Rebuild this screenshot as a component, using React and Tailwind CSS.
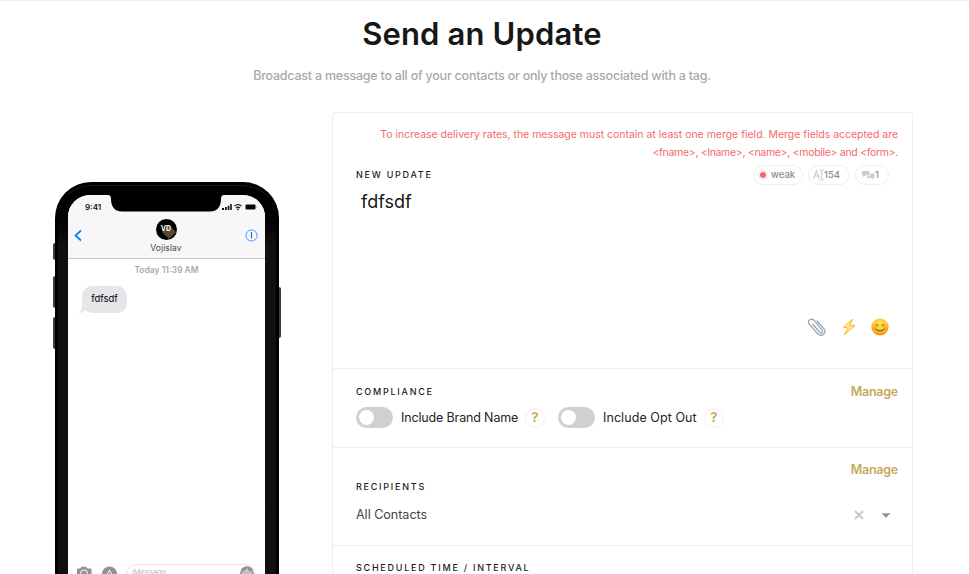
import React from "react";

function Label({ children, className = "" }) {
  return (
    <div className={`text-[9px] leading-[12px] font-medium tracking-[1.75px] text-[#1c1c1c] whitespace-nowrap ${className}`}>
      {children}
    </div>
  );
}

function Toggle() {
  return (
    <div className="flex h-[21px] w-[37px] shrink-0 items-center rounded-full bg-[#d0d0d0] pl-[3px]">
      <div className="size-[15px] rounded-full bg-white" />
    </div>
  );
}

function Help() {
  return (
    <div className="flex size-5 shrink-0 items-center justify-center rounded-full border border-[#f0f0f0] text-[13px] leading-none font-bold text-[#d0ab56]">
      ?
    </div>
  );
}

function Manage() {
  return <div className="pt-px text-[12.5px] leading-[16px] font-semibold tracking-[-0.25px] text-[#c9a959]">Manage</div>;
}

function StatusIcons() {
  return (
    <svg className="h-[8px] w-[36px]" viewBox="0 0 36 8">
      <path d="M0 5h2v2H0zM3 4h1.7v3H3zM5.7 2.7h1.7V7H5.7zM8.2 1h1.6v6H8.2z" fill="#111" />
      <g fill="none" stroke="#111" strokeWidth="1.1">
        <path d="M12.3 3.2Q16 0 19.7 3.2" />
        <path d="M14 5Q16 3.2 18 5" />
      </g>
      <circle cx="16" cy="6.3" r="0.9" fill="#111" />
      <rect x="23.5" y="1.5" width="10" height="5" rx="1" fill="#050505" />
      <path d="M35 3v2" stroke="#aaa" strokeWidth="0.7" />
    </svg>
  );
}

function Phone() {
  return (
    <div className="relative ml-[55px] mt-[70px] h-[450px] w-[224px] shrink-0 rounded-t-[36px] bg-[#000] px-[3px] pt-[3px]">
      <div className="absolute -left-[2px] top-[61px] h-[17px] w-[2px] rounded-l-sm bg-[#3c3c3e]" />
      <div className="absolute -left-[2px] top-[94px] h-[32px] w-[2px] rounded-l-sm bg-[#3c3c3e]" />
      <div className="absolute -left-[2px] top-[135px] h-[32px] w-[2px] rounded-l-sm bg-[#3c3c3e]" />
      <div className="absolute -right-[2px] top-[105px] h-[51px] w-[2px] rounded-r-sm bg-[#3c3c3e]" />
      <div className="h-full rounded-t-[33px] border-t border-[#1c1c1c] bg-gradient-to-b from-black to-[#101010] to-[60px] pl-[10px] pr-[11px] pt-[9px]">
        <div className="relative flex h-full flex-col overflow-hidden rounded-t-[22px] bg-white">
          <svg className="absolute left-[40px] top-0 h-[18px] w-[116px]" viewBox="0 0 116 18">
            <path d="M0 0Q3 0 3 4C3 12 7 16.5 14 16.5H102C109 16.5 113 12 113 4Q113 0 116 0Z" fill="#000" />
          </svg>
          <div className="h-[64px] shrink-0 border-b border-[#c9c9cb] bg-[#f7f7f7]">
            <div className="flex h-[24px] items-center justify-between pl-[17px] pr-[7px]">
              <span className="text-[8px] leading-[10px] font-semibold text-[#111]">9:41</span>
              <StatusIcons />
            </div>
            <div className="grid grid-cols-[32px_1fr_32px] pl-[6px] pr-[7px]">
              <svg className="mt-[10px] h-[13px] w-[8px]" viewBox="0 0 8 13">
                <path d="M7 1.5 1.5 6.5 7 11.5" fill="none" stroke="#087cff" strokeWidth="1.7" />
              </svg>
              <div className="flex flex-col items-center">
                <div className="relative flex size-[21px] items-center justify-center overflow-hidden rounded-full bg-black">
                  <div className="absolute left-[8px] top-[8px] size-[10px] rotate-45 bg-[#5b4a2c]" />
                  <span className="relative text-[7px] font-bold text-white">VD</span>
                </div>
                <span className="mt-[3px] text-[8.5px] leading-[11px] tracking-[0.1px] text-[#444]">Vojislav</span>
              </div>
              <svg className="mt-[10px] size-[13px] justify-self-end" viewBox="0 0 13 13">
                <circle cx="6.5" cy="6.5" r="5.5" fill="none" stroke="#2f91ff" strokeWidth="0.9" />
                <path d="M6.5 3v6.6" stroke="#087cff" strokeWidth="1.2" />
              </svg>
            </div>
          </div>
          <div className="mt-[5px] text-center text-[8.5px] leading-[12px] font-semibold text-[#aaaaae]">Today 11:39 AM</div>
          <div className="relative ml-[14px] mt-[10px] h-[27px] w-[45px] rounded-[10px] bg-[#e5e5ea] text-center text-[9.5px] leading-[25px] text-black">
            <svg className="absolute -left-[3px] bottom-0 h-[9px] w-[12px]" viewBox="0 0 12 9">
              <path d="M3 0C3 4 2 7 0 9Q4 9 6 6L12 4V0Z" fill="#e5e5ea" />
            </svg>
            <span className="relative">fdfsdf</span>
          </div>
          <div className="mt-[251px] flex h-[22px] items-start pl-[8px] pr-[8px]">
            <svg className="mt-[2px] h-[14px] w-[16px]" viewBox="0 0 16 14">
              <path d="M1 3.5Q1 2.5 2 2.5H4L5.5 .8H10L11.5 2.5H14.5Q15.5 2.5 15.5 3.5V13H1Z" fill="#929296" />
              <circle cx="8" cy="7.3" r="3.4" fill="none" stroke="#fff" strokeWidth="1" />
            </svg>
            <svg className="ml-[9px] mt-[2px] h-[16px] w-[17px]" viewBox="0 0 17 16">
              <circle cx="8.5" cy="8.3" r="7.7" fill="#929296" />
              <path d="M5 11 8.5 4 12 11M4 9h9" fill="none" stroke="#fff" strokeWidth="1" />
            </svg>
            <div className="ml-[8px] flex h-[21px] w-[130px] items-start justify-between rounded-full border border-[#e4e4e6] pl-[5px] pr-[1px]">
              <span className="mt-[2px] text-[7.5px] leading-[12px] text-[#b9b9bc]">iMessage</span>
              <svg className="mt-[1px] size-[14px]" viewBox="0 0 14 14">
                <circle cx="7" cy="7" r="6.8" fill="#929296" />
                <path d="M3 5.5v3M5 4v6M7 2.5v9M9 4.5v5M11 5.5v3" stroke="#fff" strokeWidth="0.9" />
              </svg>
            </div>
          </div>
        </div>
      </div>
    </div>
  );
}

function Paperclip() {
  return (
    <svg className="size-[20px]" viewBox="0 0 20 20" fill="none" strokeLinecap="round" strokeLinejoin="round">
      <path d="M6 7.5 12.8 15.4C14.5 17 16.5 15.2 15.2 13.5L7.4 3.6C4.6.3-.2 3.7 2.2 7.2L10.2 16.4C14.2 20.6 20.2 16.4 17.2 12.2L10 4" stroke="#8fa1b1" strokeWidth="1.2" />
      <path d="M3.3 7.3 11 16M8.2 3.5l7.5 9.2" stroke="#ccd6de" strokeWidth="0.6" />
    </svg>
  );
}

function Bolt() {
  return (
    <svg className="h-[18px] w-[14px]" viewBox="0 0 14 18">
      <path d="M11 1 1.2 9.4 6.3 10 2 17 13 7.5 7.5 7Z" fill="#ffe98a" stroke="#fbb42c" strokeWidth="1" strokeLinejoin="round" />
    </svg>
  );
}

function Smile() {
  return (
    <svg className="size-[18px]" viewBox="0 0 18 18">
      <defs>
        <radialGradient id="face" cx="50%" cy="32%" r="68%">
          <stop offset="0" stopColor="#ffe65a" />
          <stop offset="0.6" stopColor="#ffc52c" />
          <stop offset="1" stopColor="#f08a13" />
        </radialGradient>
      </defs>
      <circle cx="9" cy="9" r="8.6" fill="url(#face)" />
      <circle cx="3.9" cy="10.3" r="2" fill="#fb7c2d" opacity=".5" />
      <circle cx="14.1" cy="10.3" r="2" fill="#fb7c2d" opacity=".5" />
      <path d="M4.9 7.4Q6 5 7.1 7.4M10.9 7.4Q12 5 13.1 7.4M5.4 11.6Q9 14.4 12.6 11.6" fill="none" stroke="#70420f" strokeWidth="1" strokeLinecap="round" />
    </svg>
  );
}

const pill = "flex h-[20px] items-center rounded-full border border-[#eeeeee] text-[9.5px] leading-none font-medium text-[#8c8c8c]";

export default function App() {
  return (
    <div className="h-[574px] w-[969px] overflow-hidden border-t border-[#ededed] bg-white font-['Inter',sans-serif]">
      <header className="h-[111px] w-[964px] pt-[13px] text-center">
        <h1 className="text-[31px] leading-[40px] font-semibold tracking-[0.15px] text-[#171717]">Send an Update</h1>
        <p className="mt-[14px] text-[12.5px] leading-[16px] font-medium tracking-[-0.23px] text-[#a9a9a9]">
          Broadcast a message to all of your contacts or only those associated with a tag.
        </p>
      </header>
      <main className="flex items-start">
        <Phone />
        <div className="ml-[53px] h-[500px] w-[581px] shrink-0 rounded-[3px] border border-[#eeeeee]">
          <section className="h-[256px] border-b border-[#eeeeee] pl-[23px] pr-[14px] pt-[13px]">
            <div className="text-right text-[10.5px] leading-[18px] text-[#f46a6a]">
              <div className="whitespace-nowrap tracking-[-0.02px]">To increase delivery rates, the message must contain at least one merge field. Merge fields accepted are</div>
              <div className="tracking-[-0.31px]">{"<fname>, <lname>, <name>, <mobile> and <form>."}</div>
            </div>
            <div className="mt-[3px] flex h-[20px] items-center justify-between">
              <Label>NEW UPDATE</Label>
              <div className="mr-[9px] flex gap-[5px]">
                <div className={`${pill} w-[50px] pl-[4px]`}>
                  <span className="mr-[3px] flex size-[10px] shrink-0 items-center justify-center rounded-full border border-[#f3dede]">
                    <span className="size-[6px] rounded-full bg-[#e86c70]" />
                  </span>
                  <span>weak</span>
                </div>
                <div className={`${pill} w-[42px] pl-[4px]`}>
                  <svg className="h-[12px] w-[11px]" viewBox="0 0 11 12" fill="none" stroke="#c8c8c8">
                    <path d="M.6 9.5 3.4 2 6.2 9.5M1.6 7h3.6" strokeWidth="1.1" />
                    <path d="M6.4 1h1.3l1 .6 1-.6h1.1M6.4 11h1.3l1-.6 1 .6h1.1M8.7 1.4v9.2" strokeWidth="1" />
                  </svg>
                  154
                </div>
                <div className={`${pill} w-[34px] pl-[5px]`}>
                  <svg className="h-[10px] w-[14px]" viewBox="0 0 14 10" fill="#cdcdcd">
                    <path d="M1 1h7.5v4.5H4L2 7.5V5.5H1z" />
                    <path d="M9.3 3.5H13.5V8h-1v1.8L10.6 8H6V6.2h3.3z" />
                  </svg>
                  1
                </div>
              </div>
            </div>
            <div className="ml-[5px] mt-[5px] text-[18px] leading-[24px] text-[#161616]">fdfsdf</div>
            <div className="mt-[103px] flex items-center justify-end gap-[15px] pr-[9px]">
              <Paperclip />
              <Bolt />
              <Smile />
            </div>
          </section>
          <section className="h-[79px] border-b border-[#eeeeee] pl-[23px] pr-[14px] pt-[14px]">
            <div className="flex h-[17px] items-center justify-between">
              <Label>COMPLIANCE</Label>
              <Manage />
            </div>
            <div className="mt-[7px] flex h-[21px] items-center text-[12.5px] leading-[18px] text-[#252525]">
              <Toggle />
              <span className="ml-[8px] w-[124px] whitespace-nowrap tracking-[-0.15px]">Include Brand Name</span>
              <Help />
              <span className="w-[13px]" />
              <Toggle />
              <span className="ml-[8px] w-[101px] whitespace-nowrap tracking-[0.07px]">Include Opt Out</span>
              <Help />
            </div>
          </section>
          <section className="h-[98px] border-b border-[#eeeeee] pl-[23px] pr-[14px] pt-[13px]">
            <div className="flex justify-end"><Manage /></div>
            <Label className="mt-[3px]">RECIPIENTS</Label>
            <div className="mt-[12px] flex h-[20px] items-center justify-between">
              <span className="text-[12.5px] leading-[18px] text-[#444]">All Contacts</span>
              <div className="mr-[7px] flex items-center gap-[17px]">
                <svg className="size-[10px]" viewBox="0 0 10 10"><path d="M1 1 9 9M9 1 1 9" stroke="#c9c9c9" strokeWidth="1.9" /></svg>
                <svg className="h-[5px] w-[10px]" viewBox="0 0 10 5"><path d="M.5.3h9L5 4.8z" fill="#929292" /></svg>
              </div>
            </div>
          </section>
          <section className="pl-[23px] pt-[16px]"><Label>SCHEDULED TIME / INTERVAL</Label></section>
        </div>
      </main>
    </div>
  );
}
